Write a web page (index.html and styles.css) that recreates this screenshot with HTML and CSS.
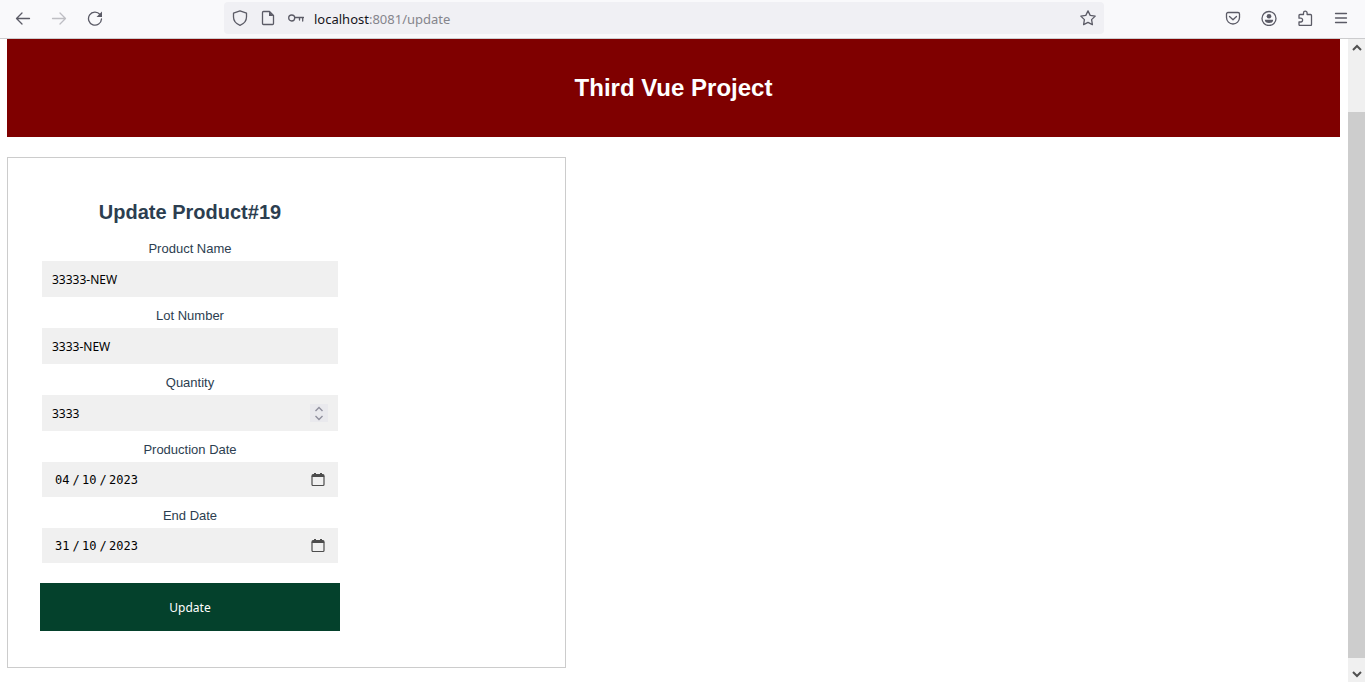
FILE: index.html
```html
<!DOCTYPE html>
<html lang="en">
<head>
<meta charset="utf-8">
<title>Third Vue Project</title>
<link rel="stylesheet" href="styles.css">
</head>
<body>
<header class="toolbar">
  <nav class="nav-buttons" aria-label="Navigation">
    <button class="tool" type="button" aria-label="Back"><svg class="icon" viewBox="0 0 16 16"><path d="M14.500 8.500H1.500M7 3 1.500 8.500 7 14"/></svg></button>
    <button class="tool tool-off" type="button" aria-label="Forward" disabled><svg class="icon" viewBox="0 0 16 16"><path d="M1.500 8.500h13M9 3 14.500 8.500 9 14"/></svg></button>
    <button class="tool" type="button" aria-label="Reload"><svg class="icon" viewBox="0 0 16 16"><path d="M13 4.500A6.500 6.500 0 1 0 14.500 9"/><path class="solid" d="M15 1.500V7H9.500z"/></svg></button>
  </nav>
  <div class="address">
    <svg class="icon" viewBox="0 0 16 16"><path d="M8 .8 14.500 3.200V7c0 3.800-2.800 6.800-6.500 8.300C4.300 13.800 1.500 10.800 1.500 7V3.200z"/></svg>
    <svg class="icon" viewBox="0 0 16 16"><path d="M3.500 1.500h6l4 4v8a1 1 0 0 1-1 1h-9a1 1 0 0 1-1-1v-11a1 1 0 0 1 1-1z"/><path class="solid" d="M9 1.500 13.500 6H9z"/></svg>
    <svg class="icon" viewBox="0 0 16 16"><circle cx="3.700" cy="8" r="3"/><path d="M6.700 7.500H15.500M11.500 7.500v2.500M14.700 7.500v3.500"/></svg>
    <div class="url" role="textbox" contenteditable="true" spellcheck="false" aria-label="Address">localhost<span class="url-rest">:8081/update</span></div>
    <button class="star" type="button" aria-label="Bookmark this page"><svg class="icon" viewBox="0 0 16 16"><path d="m8 .9 2.200 4.500 5 .7-3.600 3.500.8 5L8 12.300l-4.400 2.300.8-5L.8 6.100l5-.7z"/></svg></button>
  </div>
  <div class="side-buttons">
    <button class="tool" type="button" aria-label="Save to Pocket"><svg class="icon" viewBox="0 0 16 16"><path d="M3 2.500h10a1.500 1.500 0 0 1 1.500 1.500V7.500a6.500 6.500 0 0 1-13 0V4A1.500 1.500 0 0 1 3 2.500z"/><path d="M4.500 6.500 8 9.800l3.500-3.300"/></svg></button>
    <button class="tool" type="button" aria-label="Account"><svg class="icon" viewBox="0 0 16 16"><circle cx="8" cy="8.500" r="7"/><circle class="solid" cx="8" cy="6.200" r="2.300"/><path class="solid" d="M3.800 9.800h8.400c0 2.300-1.700 3.300-4.200 3.300S3.800 12.100 3.800 9.800z"/></svg></button>
    <button class="tool" type="button" aria-label="Extensions"><svg class="icon" viewBox="0 0 16 16"><path d="M2 7.500V5.500a1 1 0 0 1 1-1h3.500V3a1.800 1.800 0 0 1 3.600 0v1.500h3.400a1 1 0 0 1 1 1v9a1 1 0 0 1-1 1H3a1 1 0 0 1-1-1V12h1.700a1.900 1.900 0 0 0 0-3.800H2z"/></svg></button>
    <button class="tool" type="button" aria-label="Menu"><svg class="icon" viewBox="0 0 16 16"><path d="M2.500 3.500h11M2.500 8h11M2.500 12.500h11"/></svg></button>
  </div>
</header>
<div class="viewport">
  <main class="page">
    <div class="banner"><h1 class="banner-title">Third Vue Project</h1></div>
    <section class="card">
      <form class="form">
        <h2 class="form-title">Update Product#19</h2>
        <label class="label" for="name">Product Name</label>
        <div class="field"><input class="input" id="name" type="text" value="33333-NEW"></div>
        <label class="label" for="lot">Lot Number</label>
        <div class="field"><input class="input" id="lot" type="text" value="3333-NEW"></div>
        <label class="label" for="quantity">Quantity</label>
        <div class="field">
          <input class="input" id="quantity" type="number" value="3333">
          <div class="spinner">
            <button class="step" type="button" aria-label="Increase"><svg class="chevron" viewBox="0 0 10 6"><path d="M1.500 5 5 1.500 8.500 5"/></svg></button>
            <button class="step" type="button" aria-label="Decrease"><svg class="chevron" viewBox="0 0 10 6"><path d="M1.500 1 5 4.500 8.500 1"/></svg></button>
          </div>
        </div>
        <label class="label" for="start-day">Production Date</label>
        <div class="field field-date">
          <input class="part" id="start-day" type="text" value="04"><span class="slash">/</span><input class="part" type="text" aria-label="Production month" value="10"><span class="slash">/</span><input class="part part-year" type="text" aria-label="Production year" value="2023">
          <button class="calendar" type="button" aria-label="Pick production date"><svg class="calendar-icon" viewBox="0 0 14 14"><path class="calendar-top" d="M2 1h1V0h2v1h4V0h2v1h1a1.500 1.500 0 0 1 1.500 1.500V4H.5V2.500A1.500 1.500 0 0 1 2 1z"/><rect class="calendar-box" x="1" y="3" width="12" height="9.500" rx="1"/></svg></button>
        </div>
        <label class="label" for="end-day">End Date</label>
        <div class="field field-date">
          <input class="part" id="end-day" type="text" value="31"><span class="slash">/</span><input class="part" type="text" aria-label="End month" value="10"><span class="slash">/</span><input class="part part-year" type="text" aria-label="End year" value="2023">
          <button class="calendar" type="button" aria-label="Pick end date"><svg class="calendar-icon" viewBox="0 0 14 14"><path class="calendar-top" d="M2 1h1V0h2v1h4V0h2v1h1a1.500 1.500 0 0 1 1.500 1.500V4H.5V2.500A1.500 1.500 0 0 1 2 1z"/><rect class="calendar-box" x="1" y="3" width="12" height="9.500" rx="1"/></svg></button>
        </div>
        <button class="submit" type="submit">Update</button>
      </form>
    </section>
  </main>
  <div class="scrollbar">
    <button class="scroll-button" type="button" aria-label="Scroll up"><svg class="scroll-icon" viewBox="0 0 10 8"><path d="M1 6 5 2l4 4"/></svg></button>
    <div class="scroll-thumb"></div>
    <button class="scroll-button scroll-down" type="button" aria-label="Scroll down"><svg class="scroll-icon" viewBox="0 0 10 8"><path d="M1 2l4 4 4-4"/></svg></button>
  </div>
</div>
</body>
</html>
```

FILE: styles.css
```css
* { box-sizing: border-box; }

body {
  display: flex;
  flex-direction: column;
  min-height: 100vh;
  margin: 0;
  background: #fff;
  color: #2c3e50;
  font-family: "Liberation Sans", Arial, sans-serif;
  font-size: 13px;
}

button {
  padding: 0;
  border: 0;
  background: none;
  color: inherit;
}

input {
  min-width: 0;
  padding: 0;
  border: 0;
  outline: 0;
  background: none;
  color: #000;
}

svg {
  display: block;
  fill: none;
  stroke: currentColor;
}

/* Browser toolbar */
.toolbar {
  display: flex;
  align-items: center;
  height: 39px;
  padding: 0 9px 2px 8px;
  border-bottom: 1px solid #ccccce;
  background: #f9f9fb;
  color: #5b5b66;
}

.nav-buttons,
.side-buttons {
  display: flex;
  gap: 6px;
}

.tool {
  display: grid;
  place-items: center;
  width: 30px;
  height: 32px;
}

.tool-off { color: #bebec3; }

.icon {
  flex: none;
  width: 16px;
  height: 16px;
  stroke-width: 1.3;
  stroke-linejoin: round;
  stroke-linecap: round;
}

.solid {
  fill: currentColor;
  stroke: none;
}

.address {
  display: flex;
  flex: 1;
  align-items: center;
  gap: 12px;
  height: 32px;
  margin: 0 114px;
  padding: 0 8px;
  border-radius: 4px;
  background: #f0f0f4;
}

.url {
  flex: 1;
  margin-left: -2px;
  padding-top: 2px;
  outline: 0;
  color: #15141a;
  font: 13px/20px "Noto Sans", sans-serif;
}

.url-rest { color: #85858c; }

/* Page */
.viewport {
  display: flex;
  flex: 1;
}

.page {
  flex: 1;
  padding: 0 8px 14px 7px;
}

.banner {
  padding: 35px 0;
  background: #7f0000;
  text-align: center;
}

.banner-title {
  margin: 0;
  color: #fff;
  font-size: 24px;
  line-height: 28px;
}

.card {
  width: 42%;
  min-width: 366px;
  max-width: 559px;
  margin-top: 20px;
  padding: 40px 32px 36px;
  border: 1px solid #ccc;
}

.form {
  display: flex;
  flex-direction: column;
  width: 300px;
  text-align: center;
}

.form-title {
  margin: 0 0 4px;
  font-size: 20px;
  line-height: 28px;
}

.label {
  margin: 11px 0 4px;
  line-height: 16px;
}

.field {
  display: flex;
  align-items: center;
  height: 36px;
  margin: 0 2px;
  padding: 0 10px;
  background: #f0f0f0;
}

.input {
  flex: 1;
  padding-top: 2px;
  appearance: textfield;
  font: 12px/18px "Noto Sans", sans-serif;
}

.input::-webkit-inner-spin-button { appearance: none; }

.spinner {
  display: grid;
  width: 18px;
  height: 18px;
  background: #e9e9ed;
  color: #8f8f9d;
}

.step {
  display: grid;
  place-items: center;
}

.chevron {
  width: 10px;
  height: 6px;
  stroke-width: 1.4;
}

.field-date {
  height: 35px;
  padding: 0 13px;
  color: #000;
}

.part,
.slash {
  width: 15px;
  font: 12px/16px "DejaVu Sans Mono", monospace;
}

.slash { width: 12px; }

.part-year { width: 30px; }

.calendar {
  margin-left: auto;
  color: #4d4d4d;
}

.calendar-icon {
  width: 14px;
  height: 14px;
}

.calendar-top {
  fill: currentColor;
  stroke: none;
}

.calendar-box { stroke-width: 1.2; }

.submit {
  height: 48px;
  margin-top: 20px;
  padding-top: 2px;
  background: #04412c;
  color: #fff;
  font: 12px/18px "Noto Sans", sans-serif;
}

/* Scrollbar */
.scrollbar {
  display: grid;
  grid-template-rows: 17px 56fr 546fr 7fr 17px;
  width: 17px;
  background: #f0f0f0;
  color: #505050;
}

.scroll-button {
  display: grid;
  place-items: center;
}

.scroll-thumb {
  grid-row: 3;
  background: #cdcdcd;
}

.scroll-down { grid-row: 5; }

.scroll-icon {
  width: 10px;
  height: 8px;
  stroke-width: 2;
}
```
